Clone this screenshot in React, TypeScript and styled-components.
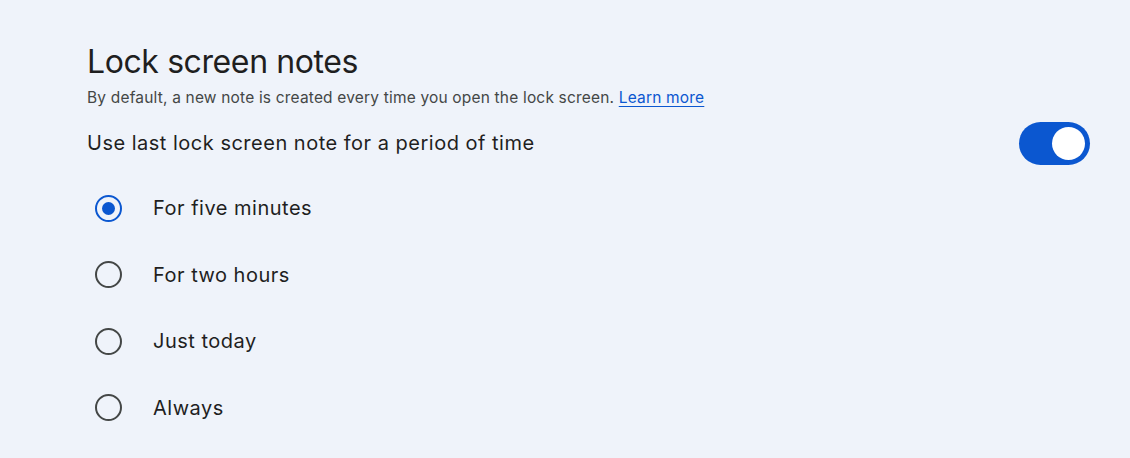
import React, { useState } from "react";
import styled, { createGlobalStyle } from "styled-components";

const GlobalStyle = createGlobalStyle`
  html, body {
    margin: 0;
    padding: 0;
    background: #eff3fa;
  }
  body {
    font-family: Inter, Roboto, "Noto Sans", sans-serif;
    color: #1f1f1f;
  }
`;

const Page = styled.div`
  box-sizing: border-box;
  width: 1130px;
  height: 458px;
  padding: 40px 40px 0 87px;
  background: #eff3fa;
  overflow: hidden;
`;

const Title = styled.h1`
  margin: 0;
  font-size: 32px;
  font-weight: 400;
  line-height: 44px;
  letter-spacing: -0.4px;
  color: #1f1f1f;
`;

const Subtitle = styled.p`
  margin: 3px 0 0;
  font-size: 15.5px;
  line-height: 22px;
  color: #444746;
  letter-spacing: 0.18px;
`;

const Link = styled.a`
  color: #0b57d0;
  text-decoration: underline;
  text-underline-offset: 3px;
`;

const ToggleRow = styled.div`
  display: flex;
  align-items: center;
  justify-content: space-between;
  margin-top: 12px;
  height: 44px;
`;

const RowLabel = styled.span`
  font-size: 20px;
  letter-spacing: 0.5px;
  color: #1f1f1f;
`;

const Track = styled.button<{ $on: boolean }>`
  position: relative;
  width: 71px;
  height: 43px;
  border: none;
  border-radius: 22px;
  padding: 0;
  background: ${(p) => (p.$on ? "#0b57d0" : "#c4c7c5")};
  cursor: pointer;
`;

const Knob = styled.span<{ $on: boolean }>`
  position: absolute;
  top: 5px;
  left: ${(p) => (p.$on ? "33px" : "5px")};
  width: 33px;
  height: 33px;
  border-radius: 50%;
  background: #fff;
`;

const Options = styled.div`
  display: flex;
  flex-direction: column;
  margin-top: 10px;
`;

const Option = styled.label`
  display: flex;
  align-items: center;
  height: 66.5px;
  cursor: pointer;
`;

const RadioOuter = styled.span<{ $checked: boolean }>`
  box-sizing: border-box;
  display: flex;
  align-items: center;
  justify-content: center;
  width: 27px;
  height: 27px;
  margin-left: 8px;
  border-radius: 50%;
  border: 2.7px solid ${(p) => (p.$checked ? "#0b57d0" : "#444746")};
`;

const RadioDot = styled.span`
  width: 13px;
  height: 13px;
  border-radius: 50%;
  background: #0b57d0;
`;

const OptionText = styled.span`
  margin-left: 31px;
  font-size: 20px;
  letter-spacing: 0.5px;
  color: #1f1f1f;
`;

const choices = ["For five minutes", "For two hours", "Just today", "Always"];

export default function App() {
  const [on, setOn] = useState(true);
  const [selected, setSelected] = useState(0);

  return (
    <Page>
      <GlobalStyle />
      <Title>Lock screen notes</Title>
      <Subtitle>
        By default, a new note is created every time you open the lock screen.{" "}
        <Link href="#">Learn more</Link>
      </Subtitle>
      <ToggleRow>
        <RowLabel>Use last lock screen note for a period of time</RowLabel>
        <Track $on={on} onClick={() => setOn(!on)} aria-pressed={on}>
          <Knob $on={on} />
        </Track>
      </ToggleRow>
      <Options>
        {choices.map((c, i) => (
          <Option key={c} onClick={() => setSelected(i)}>
            <RadioOuter $checked={selected === i}>
              {selected === i && <RadioDot />}
            </RadioOuter>
            <OptionText>{c}</OptionText>
          </Option>
        ))}
      </Options>
    </Page>
  );
}
